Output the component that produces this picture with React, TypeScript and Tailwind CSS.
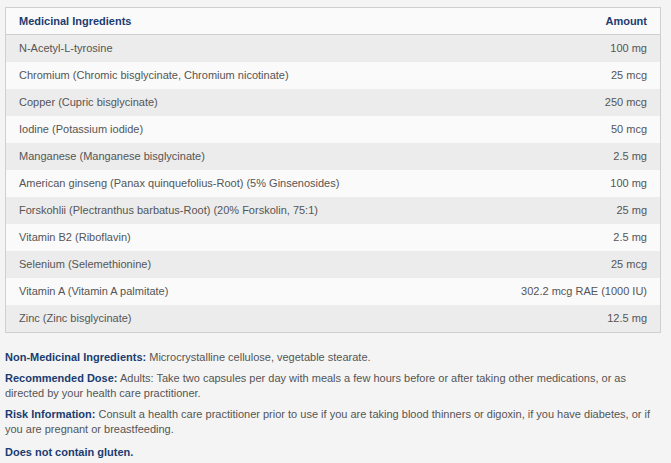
import React from "react";

const rows: [string, string][] = [
  ["N-Acetyl-L-tyrosine", "100 mg"],
  ["Chromium (Chromic bisglycinate, Chromium nicotinate)", "25 mcg"],
  ["Copper (Cupric bisglycinate)", "250 mcg"],
  ["Iodine (Potassium iodide)", "50 mcg"],
  ["Manganese (Manganese bisglycinate)", "2.5 mg"],
  ["American ginseng (Panax quinquefolius-Root) (5% Ginsenosides)", "100 mg"],
  ["Forskohlii (Plectranthus barbatus-Root) (20% Forskolin, 75:1)", "25 mg"],
  ["Vitamin B2 (Riboflavin)", "2.5 mg"],
  ["Selenium (Selemethionine)", "25 mcg"],
  ["Vitamin A (Vitamin A palmitate)", "302.2 mcg RAE (1000 IU)"],
  ["Zinc (Zinc bisglycinate)", "12.5 mg"],
];

export default function App() {
  return (
    <div
      className="w-[671px] h-[463px] bg-[#f4f4f4] pl-[5px] pt-[7px] text-[11px] text-[#555555] overflow-hidden"
      style={{ fontFamily: '"Liberation Sans", Arial, sans-serif' }}
    >
      <div className="w-[656px] border border-[#cfcfcf]">
        <div className="flex h-[27px] items-center justify-between border-b border-[#cfcfcf] bg-[#fafafa] px-[13px] font-bold text-[#1a3c70]">
          <span>Medicinal Ingredients</span>
          <span>Amount</span>
        </div>
        {rows.map(([name, amt], i) => (
          <div
            key={i}
            className={
              "flex h-[27px] items-center justify-between px-[13px] " +
              (i % 2 === 0 ? "bg-[#ececec]" : "bg-[#fafafa]")
            }
          >
            <span>{name}</span>
            <span>{amt}</span>
          </div>
        ))}
      </div>
      <div className="mt-[17px] leading-[15px]">
        <p className="mb-[6px]">
          <b className="text-[#1a3c70]">Non-Medicinal Ingredients:</b> Microcrystalline cellulose, vegetable stearate.
        </p>
        <p className="mb-[6px]">
          <b className="text-[#1a3c70]">Recommended Dose:</b> Adults: Take two capsules per day with meals a few hours before or after taking other medications, or as
          <br />
          directed by your health care practitioner.
        </p>
        <p className="mb-[8px]">
          <b className="text-[#1a3c70]">Risk Information:</b> Consult a health care practitioner prior to use if you are taking blood thinners or digoxin, if you have diabetes, or if
          <br />
          you are pregnant or breastfeeding.
        </p>
        <p>
          <b className="text-[#1a3c70]">Does not contain gluten.</b>
        </p>
      </div>
    </div>
  );
}
